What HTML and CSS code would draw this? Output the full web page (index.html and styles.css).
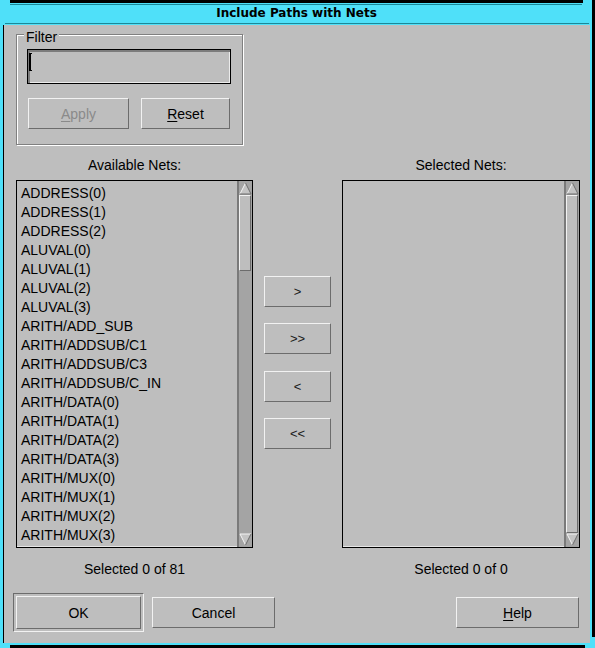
FILE: index.html
```html
<!DOCTYPE html>
<html lang="en">
<head>
  <meta charset="UTF-8">
  <title>Include Paths with Nets</title>
  <link rel="stylesheet" href="styles.css">
</head>
<body>

  <div class="window">
    <span class="corner corner-tl"></span>
    <span class="corner corner-tr"></span>
    <span class="corner corner-bl"></span>
    <span class="corner corner-br"></span>

    <div class="titlebar">
      <h1>Include Paths with Nets</h1>
    </div>

    <div class="client">
      <!-- filter group -->
      <div class="filter">
        <span class="filter-title">Filter</span>
        <div class="filter-input"><span class="caret"></span></div>
        <div class="filter-buttons">
          <button class="btn btn-apply" disabled><u>A</u>pply</button>
          <button class="btn btn-reset"><u>R</u>eset</button>
        </div>
      </div>

      <!-- the two lists -->
      <div class="nets">
        <div class="nets-label label-avail">Available Nets:</div>
        <div class="nets-label label-sel">Selected Nets:</div>

        <div class="listbox list-avail">
          <ul class="items">
            <li>ADDRESS(0)</li>
            <li>ADDRESS(1)</li>
            <li>ADDRESS(2)</li>
            <li>ALUVAL(0)</li>
            <li>ALUVAL(1)</li>
            <li>ALUVAL(2)</li>
            <li>ALUVAL(3)</li>
            <li>ARITH/ADD_SUB</li>
            <li>ARITH/ADDSUB/C1</li>
            <li>ARITH/ADDSUB/C3</li>
            <li>ARITH/ADDSUB/C_IN</li>
            <li>ARITH/DATA(0)</li>
            <li>ARITH/DATA(1)</li>
            <li>ARITH/DATA(2)</li>
            <li>ARITH/DATA(3)</li>
            <li>ARITH/MUX(0)</li>
            <li>ARITH/MUX(1)</li>
            <li>ARITH/MUX(2)</li>
            <li>ARITH/MUX(3)</li>
          </ul>
          <div class="scrollbar">
            <svg class="arrow" width="13" height="13" viewBox="0 0 13 13">
              <polygon points="6.5,1 12,12 1,12" fill="#c4c4c4"/>
              <polyline points="1,12 6.5,1" fill="none" stroke="#f4f4f4"/>
              <polyline points="6.5,1 12,12 1,12" fill="none" stroke="#6e6e6e"/>
            </svg>
            <div class="thumb thumb-short"></div>
            <div class="trough"></div>
            <svg class="arrow" width="13" height="13" viewBox="0 0 13 13">
              <polygon points="1,1 12,1 6.5,12" fill="#c4c4c4"/>
              <polyline points="12,1 1,1 6.5,12" fill="none" stroke="#f4f4f4"/>
              <polyline points="12,1 6.5,12" fill="none" stroke="#6e6e6e"/>
            </svg>
          </div>
        </div>

        <div class="movers">
          <button class="btn btn-move">&gt;</button>
          <button class="btn btn-move">&gt;&gt;</button>
          <button class="btn btn-move">&lt;</button>
          <button class="btn btn-move">&lt;&lt;</button>
        </div>

        <div class="listbox list-sel">
          <ul class="items"></ul>
          <div class="scrollbar">
            <svg class="arrow" width="13" height="13" viewBox="0 0 13 13">
              <polygon points="6.5,1 12,12 1,12" fill="#c4c4c4"/>
              <polyline points="1,12 6.5,1" fill="none" stroke="#f4f4f4"/>
              <polyline points="6.5,1 12,12 1,12" fill="none" stroke="#6e6e6e"/>
            </svg>
            <div class="thumb thumb-full"></div>
            <svg class="arrow" width="13" height="13" viewBox="0 0 13 13">
              <polygon points="1,1 12,1 6.5,12" fill="#c4c4c4"/>
              <polyline points="12,1 1,1 6.5,12" fill="none" stroke="#f4f4f4"/>
              <polyline points="12,1 6.5,12" fill="none" stroke="#6e6e6e"/>
            </svg>
          </div>
        </div>

        <div class="nets-status status-avail">Selected 0 of 81</div>
        <div class="nets-status status-sel">Selected 0 of 0</div>
      </div>

      <!-- dialog buttons -->
      <div class="actions">
        <span class="default-ring"><button class="btn btn-ok">OK</button></span>
        <button class="btn btn-cancel">Cancel</button>
        <button class="btn btn-help"><u>H</u>elp</button>
      </div>
    </div>
  </div>

</body>
</html>
```

FILE: styles.css
```css
body {
  margin: 0;
  background: #000;
  font-family: "Liberation Sans", Arial, sans-serif;
  font-size: 14px;
  color: #000;
}

/* window frame */
.window {
  position: relative;
  box-sizing: border-box;
  width: 595px;
  height: 648px;
  display: flex;
  flex-direction: column;
  background: #4fe0f9;
  border: 3px solid #000;
  border-left: 0;
  padding: 0 2px 2px 3px;
}

.corner {
  position: absolute;
  background: #4fe0f9;
}
.corner-tl { top: -3px; left: 0; width: 10px; height: 3px; }
.corner-tr { top: -3px; right: 0; width: 9px; height: 3px; }
.corner-bl { bottom: -3px; left: 0; width: 10px; height: 3px; }
.corner-br {
  right: -3px;
  bottom: -3px;
  width: 10px;
  height: 11px;
  box-sizing: border-box;
  background: transparent;
  border-right: 3px solid #4fe0f9;
  border-bottom: 3px solid #4fe0f9;
}

.titlebar {
  display: flex;
  flex-direction: column;
  box-sizing: border-box;
  height: 22px;
  padding-top: 1px;
}
.titlebar::before {
  content: "";
  height: 1px;
  margin: 0 8px 0 7px;
  background: #1c8898;
}
.titlebar::after {
  content: "";
  height: 1px;
  margin: 0 1px 0 2px;
  background: #1c8898;
}
.titlebar h1 {
  margin: 0 0 2px;
  font: bold 12px/16px "DejaVu Sans", sans-serif;
  text-align: center;
}

.client {
  flex: 1;
  display: flex;
  flex-direction: column;
  background: #bebebe;
  border-left: 1px solid #000;
  padding: 9px 10px 11px 12px;
}

/* buttons */
.btn {
  box-sizing: border-box;
  height: 31px;
  padding: 0;
  background: #bebebe;
  border: 1px solid;
  border-color: #f2f2f2 #6c6c6c #6c6c6c #f2f2f2;
  font-family: "Liberation Sans", Arial, sans-serif;
  font-size: 14px;
  color: #000;
}
.btn u {
  text-decoration-thickness: 1px;
  text-underline-offset: 2px;
}

/* filter group */
.filter {
  display: flex;
  flex-direction: column;
  box-sizing: border-box;
  width: 227px;
  border: 1px solid #808080;
  box-shadow: inset 1px 1px 0 #fff, 1px 1px 0 #fff;
  padding: 0 11px 15px 10px;
}

.filter-title {
  align-self: flex-start;
  margin: -6px 0 4px -3px;
  padding: 0 2px;
  line-height: 16px;
  background: #bebebe;
}

.filter-input {
  box-sizing: border-box;
  height: 35px;
  display: flex;
  align-items: flex-start;
  padding: 3px 0 0 1px;
  border: 1px solid #000;
  box-shadow: inset 2px 2px 0 #7c7c7c, inset -1px -1px 0 #ececec;
}

.caret {
  box-sizing: border-box;
  width: 3px;
  height: 18px;
  border: 1px solid #000;
  border-left-width: 2px;
  border-right: 0;
}

.filter-buttons {
  display: flex;
  gap: 12px;
  margin-top: 14px;
  padding: 0 1px;
}
.btn-apply { width: 101px; color: #8a8a8a; }
.btn-reset { width: 89px; }

/* lists */
.nets {
  display: grid;
  grid-template-columns: 237px 67px 238px;
  grid-template-areas:
    "al . sl"
    "alist mv slist"
    "ast . sst";
  column-gap: 11px;
  margin-top: 12px;
}

.nets-label {
  text-align: center;
  line-height: 16px;
  margin-bottom: 7px;
}
.label-avail { grid-area: al; }
.label-sel { grid-area: sl; }

.nets-status {
  text-align: center;
  line-height: 16px;
  margin-top: 13px;
}
.status-avail { grid-area: ast; }
.status-sel { grid-area: sst; }

.listbox {
  display: flex;
  box-sizing: border-box;
  height: 368px;
  border: 1px solid #000;
  box-shadow: inset 0 -1px 0 #e6e6e6;
}
.list-avail { grid-area: alist; }
.list-sel { grid-area: slist; }

.items {
  flex: 1;
  margin: 0;
  padding: 3px 0 0 4px;
  list-style: none;
  line-height: 19px;
  overflow: hidden;
  white-space: nowrap;
}

.scrollbar {
  flex: none;
  box-sizing: border-box;
  width: 15px;
  display: flex;
  flex-direction: column;
  padding: 1px 1px 1px 0;
  background: #a4a4a4;
  border-left: 2px solid #7a7a7a;
}

.arrow {
  display: block;
  flex: none;
}

.thumb {
  box-sizing: border-box;
  background: #bebebe;
  border: 1px solid;
  border-color: #f2f2f2 #6c6c6c #6c6c6c #f2f2f2;
}
.thumb-short { height: 76px; }
.thumb-full { flex: 1; }
.trough { flex: 1; }

.movers {
  grid-area: mv;
  display: flex;
  flex-direction: column;
  gap: 16.3px;
  padding-top: 96px;
}
.btn-move {
  font-size: 13px;
  color: #1a1a1a;
}

/* dialog buttons */
.actions {
  display: flex;
  align-items: center;
  margin: 16px 0 0 -3px;
  padding-right: 1px;
}

.default-ring {
  display: flex;
  padding: 2px;
  border: 1px solid;
  border-color: #6c6c6c #f2f2f2 #f2f2f2 #6c6c6c;
}
.btn-ok { width: 125px; height: 33px; }
.btn-cancel { width: 123px; margin-left: 8px; }
.btn-help { width: 123px; margin-left: auto; }
```
